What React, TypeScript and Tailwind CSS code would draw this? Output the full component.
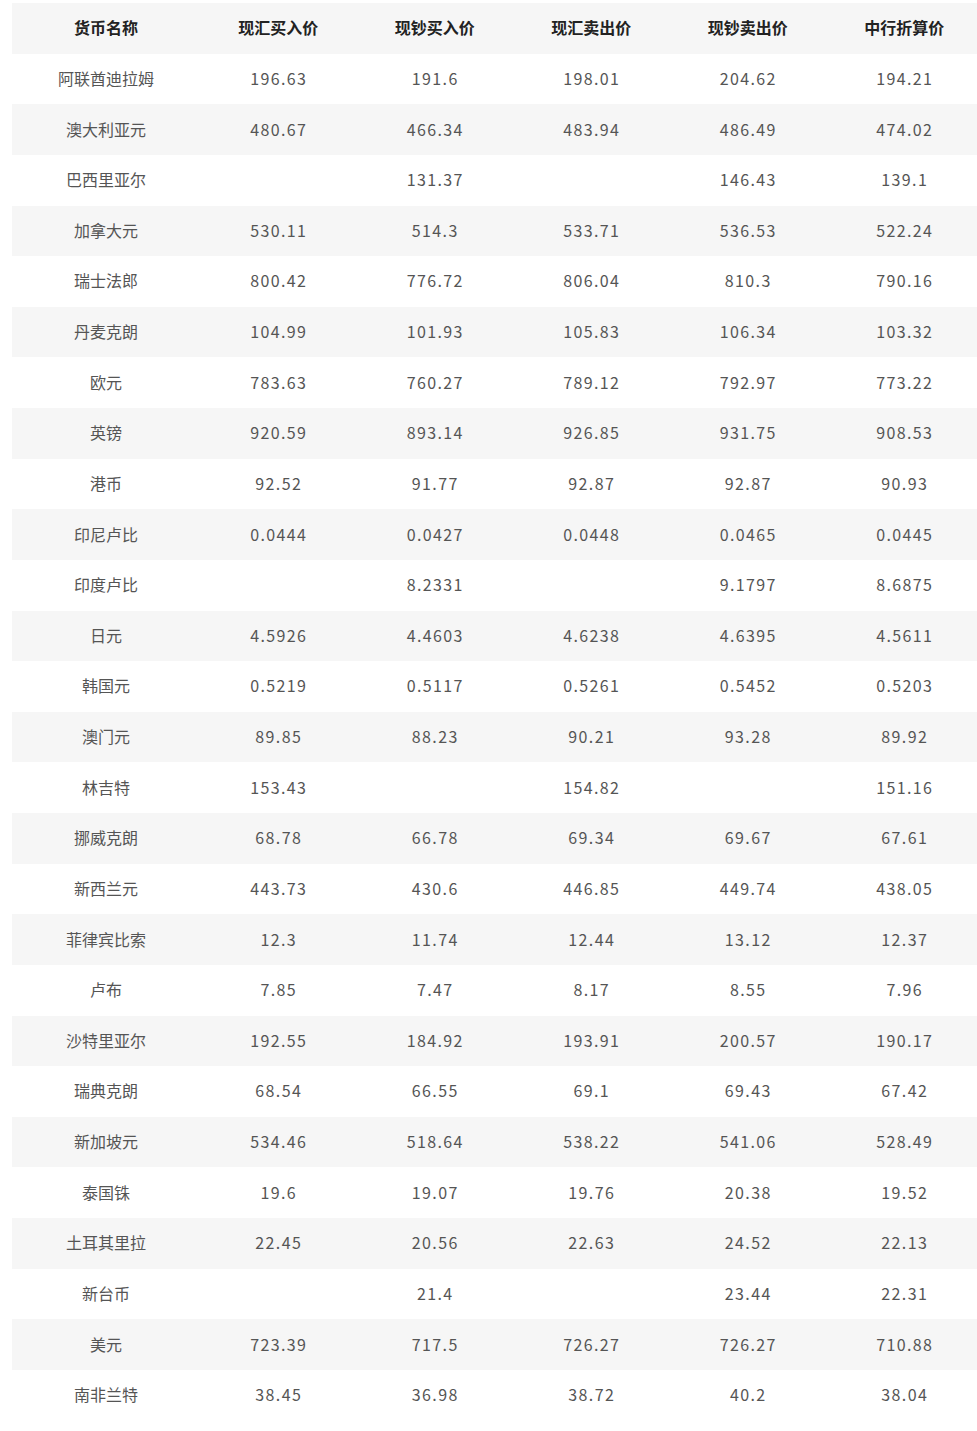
const headers = ["货币名称", "现汇买入价", "现钞买入价", "现汇卖出价", "现钞卖出价", "中行折算价"];

const rows: string[][] = [
  ["阿联酋迪拉姆", "196.63", "191.6", "198.01", "204.62", "194.21"],
  ["澳大利亚元", "480.67", "466.34", "483.94", "486.49", "474.02"],
  ["巴西里亚尔", "", "131.37", "", "146.43", "139.1"],
  ["加拿大元", "530.11", "514.3", "533.71", "536.53", "522.24"],
  ["瑞士法郎", "800.42", "776.72", "806.04", "810.3", "790.16"],
  ["丹麦克朗", "104.99", "101.93", "105.83", "106.34", "103.32"],
  ["欧元", "783.63", "760.27", "789.12", "792.97", "773.22"],
  ["英镑", "920.59", "893.14", "926.85", "931.75", "908.53"],
  ["港币", "92.52", "91.77", "92.87", "92.87", "90.93"],
  ["印尼卢比", "0.0444", "0.0427", "0.0448", "0.0465", "0.0445"],
  ["印度卢比", "", "8.2331", "", "9.1797", "8.6875"],
  ["日元", "4.5926", "4.4603", "4.6238", "4.6395", "4.5611"],
  ["韩国元", "0.5219", "0.5117", "0.5261", "0.5452", "0.5203"],
  ["澳门元", "89.85", "88.23", "90.21", "93.28", "89.92"],
  ["林吉特", "153.43", "", "154.82", "", "151.16"],
  ["挪威克朗", "68.78", "66.78", "69.34", "69.67", "67.61"],
  ["新西兰元", "443.73", "430.6", "446.85", "449.74", "438.05"],
  ["菲律宾比索", "12.3", "11.74", "12.44", "13.12", "12.37"],
  ["卢布", "7.85", "7.47", "8.17", "8.55", "7.96"],
  ["沙特里亚尔", "192.55", "184.92", "193.91", "200.57", "190.17"],
  ["瑞典克朗", "68.54", "66.55", "69.1", "69.43", "67.42"],
  ["新加坡元", "534.46", "518.64", "538.22", "541.06", "528.49"],
  ["泰国铢", "19.6", "19.07", "19.76", "20.38", "19.52"],
  ["土耳其里拉", "22.45", "20.56", "22.63", "24.52", "22.13"],
  ["新台币", "", "21.4", "", "23.44", "22.31"],
  ["美元", "723.39", "717.5", "726.27", "726.27", "710.88"],
  ["南非兰特", "38.45", "36.98", "38.72", "40.2", "38.04"],
];

const cols = "grid grid-cols-[188px_156.5px_156.5px_156.5px_156.5px_156.5px]";

export default function App() {
  return (
    <div className="w-[977px] h-[1431px] overflow-hidden bg-white pt-[3px] pl-[12px] font-['Noto_Sans_CJK_SC','Noto_Sans',sans-serif]">
      <div className="w-[970px]">
        <div className={`${cols} h-[50.63px] items-center pb-[2px] bg-[#f6f6f6] text-[16px] font-bold text-[#222]`}>
          {headers.map((h) => (
            <div key={h} className="text-center">
              {h}
            </div>
          ))}
        </div>
        {rows.map((r, i) => (
          <div
            key={r[0]}
            className={`${cols} h-[50.63px] items-center pb-[2px] text-[16px] text-[#555] ${
              i % 2 === 1 ? "bg-[#f6f6f6]" : "bg-white"
            }`}
          >
            {r.map((c, j) => (
              <div key={j} className={`text-center ${j > 0 ? "tracking-[1.4px] pl-[1px]" : ""}`}>
                {c}
              </div>
            ))}
          </div>
        ))}
      </div>
    </div>
  );
}
